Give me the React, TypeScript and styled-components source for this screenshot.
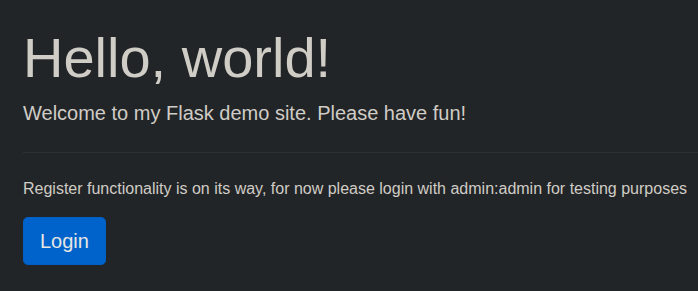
import React from 'react';
import styled, { createGlobalStyle } from 'styled-components';

const GlobalStyle = createGlobalStyle`
  html, body {
    margin: 0;
    padding: 0;
    background: #222527;
  }
  body {
    font-family: "Liberation Sans", Arial, sans-serif;
    color: #d0ccc6;
  }
`;

const Jumbotron = styled.div`
  padding: 24px 0 26px 23px;
  background: #222527;
  min-height: 291px;
  box-sizing: border-box;
`;

const Title = styled.h1`
  margin: 0 0 7px;
  font-size: 56px;
  font-weight: 300;
  line-height: 1.2;
  color: #d0ccc6;
`;

const Lead = styled.p`
  margin: 0 0 16px;
  font-size: 20px;
  line-height: 1.5;
  color: #d0ccc6;
`;

const Divider = styled.hr`
  margin: 24px 0;
  border: 0;
  border-top: 1px solid #2d3133;
`;

const Note = styled.p`
  margin: 0 0 16px;
  font-size: 16px;
  line-height: 1.5;
  white-space: nowrap;
  color: #d0ccc6;
`;

const Button = styled.a`
  display: inline-block;
  padding: 8px 16px;
  font-size: 20px;
  line-height: 1.5;
  border-radius: 4.8px;
  border: 1px solid #0060c6;
  background: #0063cc;
  color: #e8e6e3;
  text-decoration: none;
  cursor: pointer;
`;

const App = () => {
    return (
        <>
            <GlobalStyle />
            <Jumbotron>
                <Title>Hello, world!</Title>
                <Lead>Welcome to my Flask demo site. Please have fun!</Lead>
                <Divider />
                <Note>Register functionality is on its way, for now please login with admin:admin for testing purposes</Note>
                <Button href='#'>Login</Button>
            </Jumbotron>
        </>
    )
}

export default App;
